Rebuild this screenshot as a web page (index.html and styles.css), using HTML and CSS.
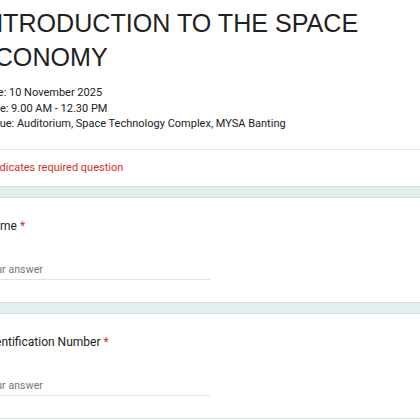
FILE: index.html
```html
<!DOCTYPE html>
<html lang="en">
<head>
<meta charset="utf-8">
<title>INTRODUCTION TO THE SPACE ECONOMY</title>
<link rel="stylesheet" href="styles.css">
</head>
<body>
<div class="page">
  <section class="card header-card">
    <div class="header-main">
      <h1 class="form-title">INTRODUCTION TO THE SPACE ECONOMY</h1>
      <div class="form-desc">
        <div>Date: 10 November 2025</div>
        <div>Time: 9.00 AM - 12.30 PM</div>
        <div>Venue: Auditorium, Space Technology Complex, MYSA Banting</div>
      </div>
    </div>
    <div class="required-note">* Indicates required question</div>
  </section>

  <section class="card question">
    <div class="q-title">Name <span class="req">*</span></div>
    <div class="answer">Your answer</div>
  </section>

  <section class="card question">
    <div class="q-title">Identification Number <span class="req">*</span></div>
    <div class="answer">Your answer</div>
  </section>
</div>
</body>
</html>
```
FILE: styles.css
```css
html, body {
  margin: 0;
  padding: 0;
  width: 420px;
  height: 420px;
  overflow: hidden;
  background: #ffffff;
}

body {
  font-family: Roboto, "Liberation Sans", Arial, sans-serif;
  color: #202124;
}

.page {
  margin-left: -40px;
  width: 520px;
  background: #e4f0f0;
}

.card {
  background: #ffffff;
  border-bottom: 1px solid #d7e3e3;
  margin-bottom: 10px;
}

.card + .card {
  border-top: 1px solid #d7e3e3;
}

.header-main {
  padding: 6px 24px 17px 24px;
  border-bottom: 1px solid #e2e4e6;
}

.form-title {
  margin: 0 0 0 -6px;
  font-family: "Liberation Sans", Arial, sans-serif;
  font-size: 25.1px;
  font-weight: 400;
  line-height: 34px;
  width: 400px;
  color: #202124;
}

.form-desc {
  margin: 11px 0 0 -3px;
  font-size: 11px;
  line-height: 15.5px;
  color: #202124;
}

.required-note {
  padding: 10px 24px 11px 23px;
  font-size: 11px;
  line-height: 15.5px;
  color: #d93025;
}

.question {
  height: 106px;
  padding: 0 24px 0 25px;
  box-sizing: border-box;
}

.q-title {
  padding-top: 19px;
  font-size: 12px;
  line-height: 18px;
  color: #202124;
}

.req {
  color: #d93025;
}

.answer {
  margin: 27px 0 0 -1px;
  width: 226px;
  font-size: 10.5px;
  line-height: 15px;
  padding-bottom: 2px;
  color: #70757a;
  letter-spacing: 0.1px;
  border-bottom: 1px solid #e3e3e3;
}
```
